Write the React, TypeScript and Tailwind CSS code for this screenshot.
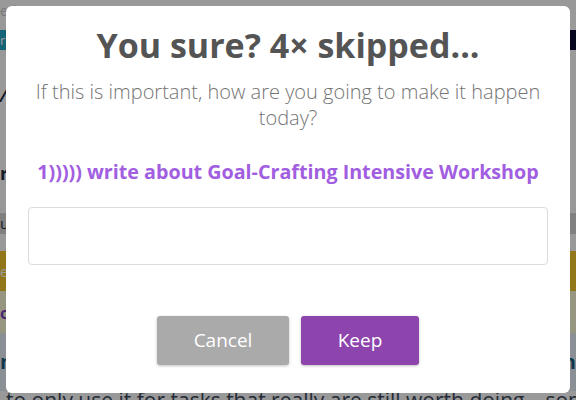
import React from "react";

const Backdrop = () => (
  <div className="flex flex-col font-['Open_Sans',sans-serif] text-[#1f2d3d]">
    <div className="h-[30px] pl-0 text-[14px] leading-[22px] text-[#c8c8c8]">ed</div>
    <div className="flex h-[20px] justify-between">
      <span className="w-[14px] bg-[#22a5c6] text-[13px] leading-[20px] text-white">r</span>
      <span className="w-[14px] bg-[#0d0a35] text-[12px] leading-[20px] text-white">s</span>
    </div>
    <div className="h-[30px]" />
    <div className="h-[24px] text-[26px] leading-[24px] italic">/</div>
    <div className="h-[58px]" />
    <div className="h-[22px] text-[18px] font-bold leading-[22px]">r,</div>
    <div className="h-[29px]" />
    <div className="h-[21px] bg-[#d6d6d6] text-[15px] leading-[21px]">ul</div>
    <div className="h-[17px]" />
    <div className="h-[40px] bg-[#f2c72a] pt-[10px] text-[14px] text-white">e</div>
    <div className="h-[42px] bg-[#fbfbd8] pt-[10px] text-[16px] font-bold text-[#7b3fc0]">c</div>
    <div className="flex h-[58px] items-center justify-between bg-[#e8f1fa] text-[20px] font-bold text-[#1d5d80]">
      <span>n</span>
      <span>n</span>
    </div>
    <div className="h-[16px] pl-[6px] text-[21px] leading-[18px] text-[#3d4a5c] whitespace-nowrap">
      to only use it for tasks that really are still worth doing—someti
    </div>
  </div>
);

export default function App() {
  return (
    <div className="relative h-[400px] w-[576px] overflow-hidden bg-white">
      <Backdrop />
      <div className="absolute inset-0 bg-black/40" />
      <div className="absolute left-[6px] top-[6px] flex h-[387px] w-[564px] flex-col items-center rounded-[6px] bg-white pt-[17px]">
        <h1 className="font-['Open_Sans',sans-serif] text-[34px] font-bold leading-[44px] text-[#545454]">
          You sure? 4× skipped...
        </h1>
        <p className="mt-[12px] w-[520px] text-center font-['Open_Sans',sans-serif] text-[20px] font-light leading-[26px] text-[#747474]">
          If this is important, how are you going to make it happen today?
        </p>
        <p className="mt-[28px] font-['Open_Sans',sans-serif] text-[19.7px] font-bold leading-[26px] text-[#a15ee0]">
          1))))) write about Goal-Crafting Intensive Workshop
        </p>
        <input
          className="mt-[22px] h-[58px] w-[520px] rounded-[4px] border border-[#dcdcdc] px-3 outline-none"
          type="text"
        />
        <div className="mt-[51px] flex gap-[12px]">
          <button className="h-[49px] w-[132px] rounded-[3px] bg-[#aaaaaa] font-['Open_Sans',sans-serif] text-[19px] text-white shadow-[0_1px_3px_rgba(0,0,0,0.25)]">
            Cancel
          </button>
          <button className="h-[49px] w-[118px] rounded-[3px] bg-[#8e44ad] font-['Open_Sans',sans-serif] text-[19px] text-white shadow-[0_1px_3px_rgba(0,0,0,0.25)]">
            Keep
          </button>
        </div>
      </div>
    </div>
  );
}
